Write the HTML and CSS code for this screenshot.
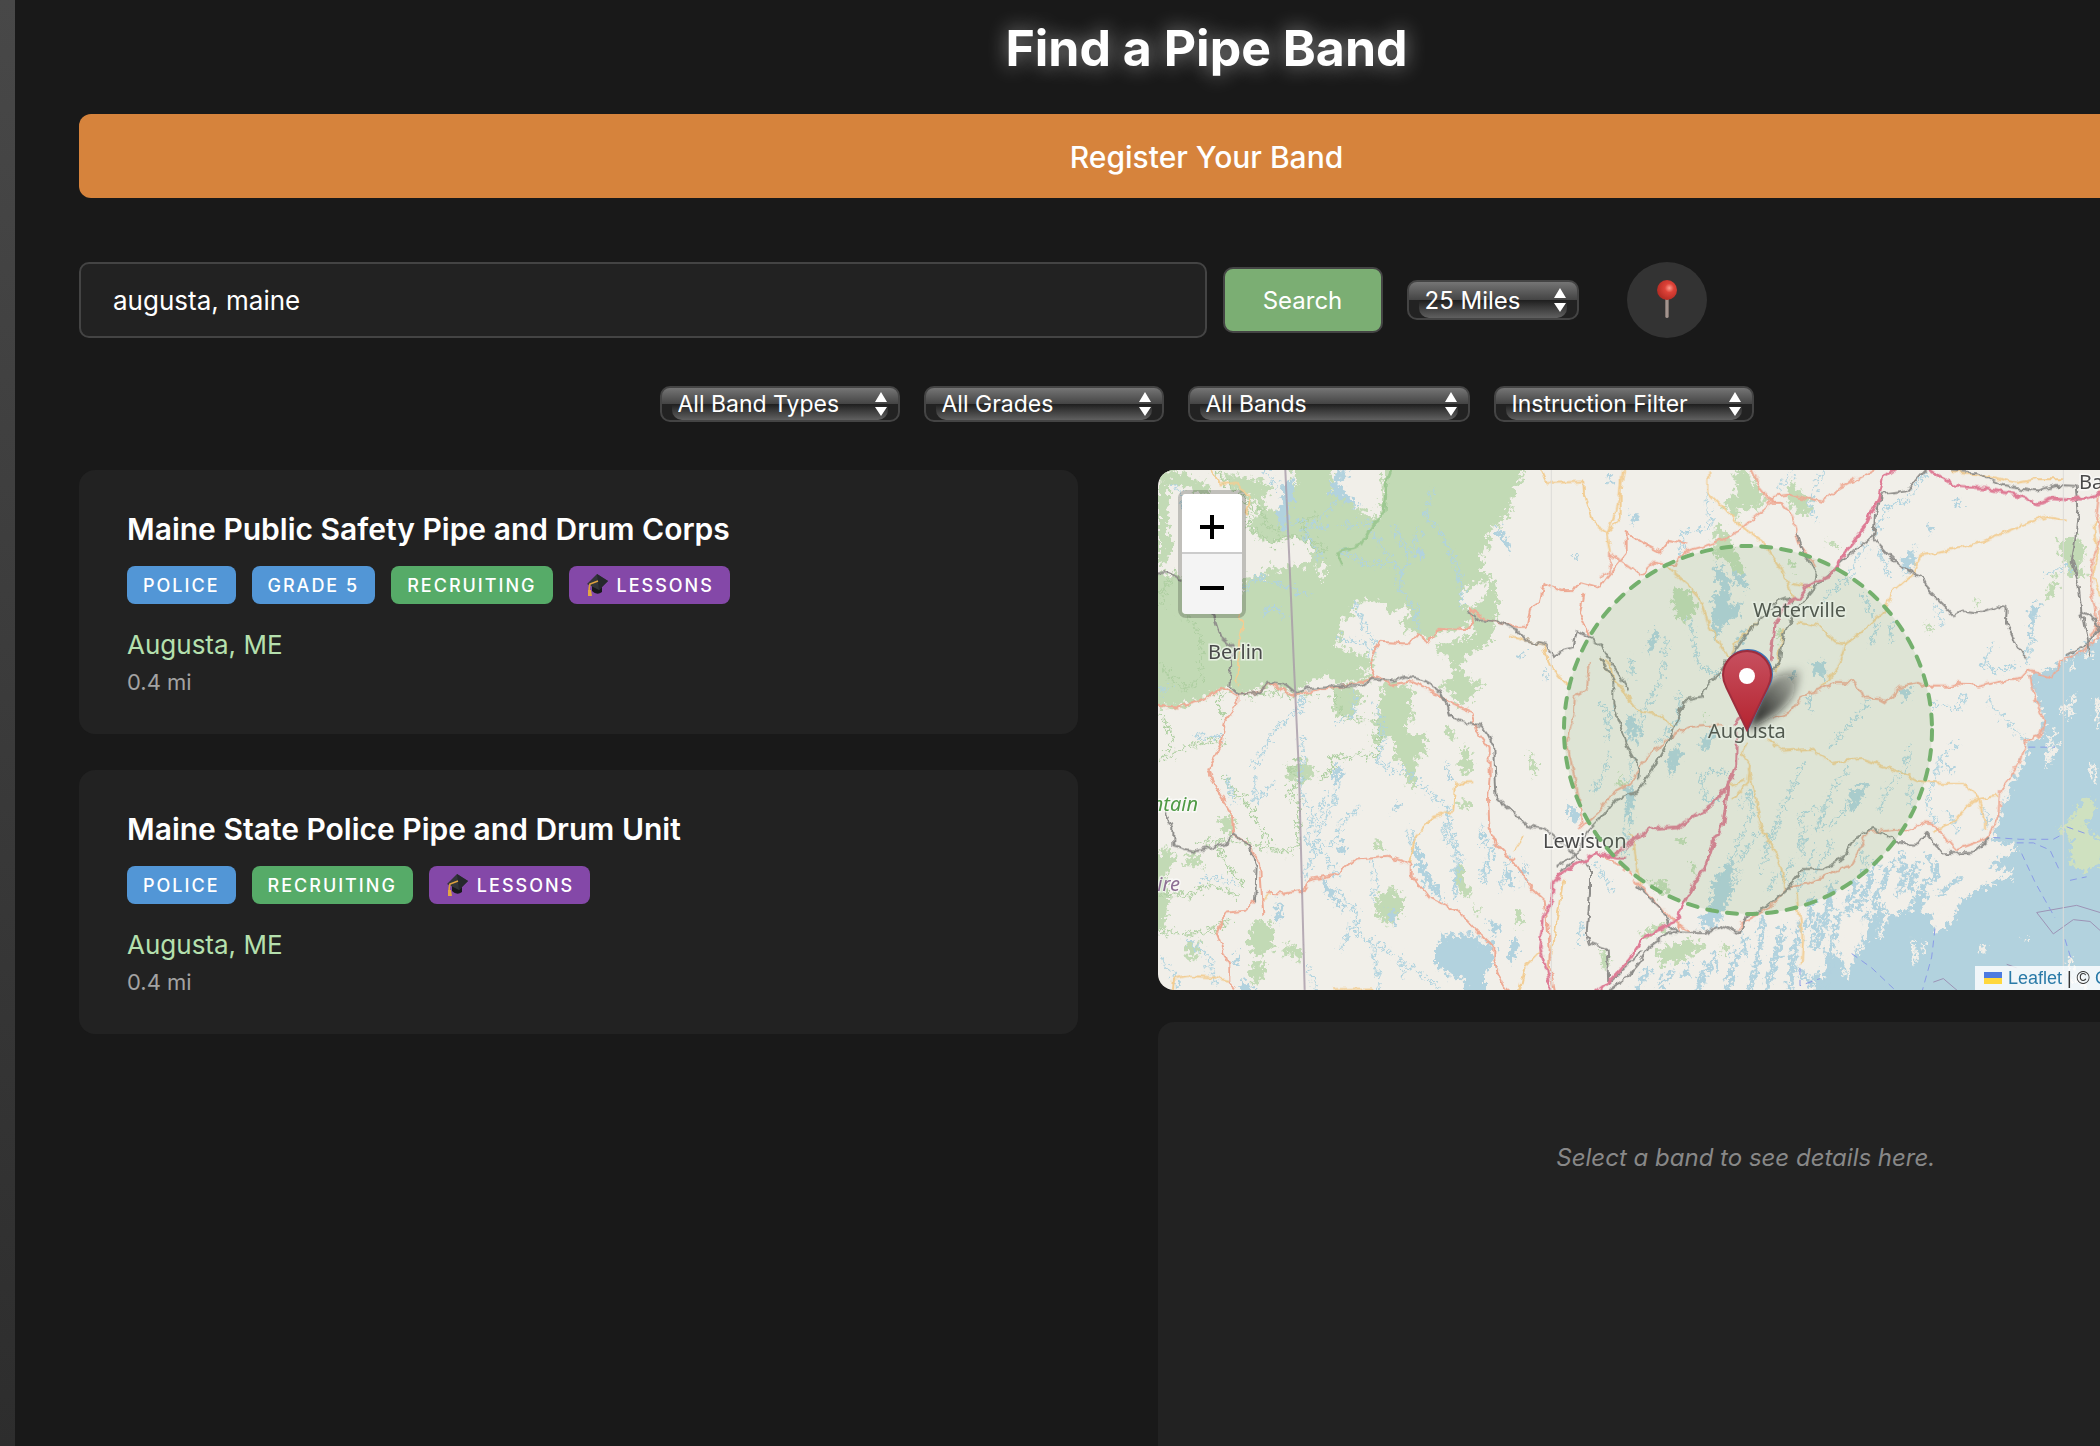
FILE: index.html
```html
<!DOCTYPE html>
<html lang="en">
<head>
<meta charset="utf-8">
<title>Find a Pipe Band</title>
<link rel="stylesheet" href="styles.css">
</head>
<body>
<main class="shell">
  <h1 class="title">Find a Pipe Band</h1>
  <button class="register" type="button">Register Your Band</button>

  <form class="search">
    <input class="search-input" type="text" value="augusta, maine" aria-label="Location">
    <button class="search-button" type="button">Search</button>
    <span class="picker picker-radius">
      <select aria-label="Radius"><option>25 Miles</option></select>
      <svg class="arrows" viewBox="0 0 12 24" aria-hidden="true"><path d="M6 0l6 10H0zM6 24l6-9H0z"/></svg>
    </span>
    <button class="locate" type="button" aria-label="Use my location">
      <svg viewBox="0 0 24 44" aria-hidden="true">
        <defs>
          <radialGradient id="ball" cx=".62" cy=".4" r=".65"><stop offset="0" stop-color="#ff9c8e"/><stop offset=".35" stop-color="#dd4238"/><stop offset="1" stop-color="#b02a22"/></radialGradient>
          <linearGradient id="needle"><stop offset="0" stop-color="#6e625e"/><stop offset=".5" stop-color="#b5a6a0"/><stop offset="1" stop-color="#6a5d58"/></linearGradient>
        </defs>
        <path d="M10 20h4v19q-2 2-4 0z" fill="url(#needle)"/>
        <circle cx="12" cy="12" r="10" fill="url(#ball)"/>
      </svg>
    </button>
  </form>

  <div class="filters">
    <span class="picker picker-types"><select aria-label="Band type"><option>All Band Types</option></select><svg class="arrows" viewBox="0 0 12 24" aria-hidden="true"><path d="M6 0l6 10H0zM6 24l6-9H0z"/></svg></span>
    <span class="picker picker-types"><select aria-label="Grade"><option>All Grades</option></select><svg class="arrows" viewBox="0 0 12 24" aria-hidden="true"><path d="M6 0l6 10H0zM6 24l6-9H0z"/></svg></span>
    <span class="picker picker-bands"><select aria-label="Bands"><option>All Bands</option></select><svg class="arrows" viewBox="0 0 12 24" aria-hidden="true"><path d="M6 0l6 10H0zM6 24l6-9H0z"/></svg></span>
    <span class="picker picker-instruction"><select aria-label="Instruction"><option>Instruction Filter</option></select><svg class="arrows" viewBox="0 0 12 24" aria-hidden="true"><path d="M6 0l6 10H0zM6 24l6-9H0z"/></svg></span>
  </div>

  <div class="columns">
    <section class="results">
      <article class="card">
        <h2>Maine Public Safety Pipe and Drum Corps</h2>
        <div class="tags">
          <span class="tag">Police</span><span class="tag">Grade 5</span><span class="tag tag-green">Recruiting</span>
          <span class="tag tag-purple"><svg class="cap" viewBox="0 0 24 24" aria-hidden="true"><path d="M7 10l10 4v5q-5 4-10-1z" fill="#17181b"/><path d="M12 1l11 7-9 9-12-6z" fill="#33353a"/><path d="M12 1l11 7-9 9z" fill="#26282c"/><path d="M13 8L5 11q-1 4-1 8" fill="none" stroke="#dfa23e" stroke-width="1.6"/><path d="M3 17h3l1 6H3z" fill="#e3a842"/></svg>Lessons</span>
        </div>
        <p class="place">Augusta, ME</p>
        <p class="distance">0.4 mi</p>
      </article>
      <article class="card">
        <h2>Maine State Police Pipe and Drum Unit</h2>
        <div class="tags">
          <span class="tag">Police</span><span class="tag tag-green">Recruiting</span>
          <span class="tag tag-purple"><svg class="cap" viewBox="0 0 24 24" aria-hidden="true"><path d="M7 10l10 4v5q-5 4-10-1z" fill="#17181b"/><path d="M12 1l11 7-9 9-12-6z" fill="#33353a"/><path d="M12 1l11 7-9 9z" fill="#26282c"/><path d="M13 8L5 11q-1 4-1 8" fill="none" stroke="#dfa23e" stroke-width="1.6"/><path d="M3 17h3l1 6H3z" fill="#e3a842"/></svg>Lessons</span>
        </div>
        <p class="place">Augusta, ME</p>
        <p class="distance">0.4 mi</p>
      </article>
    </section>

    <section class="side">
      <div class="map">
        <svg class="map-canvas" viewBox="0 0 1177 520" preserveAspectRatio="xMinYMin slice" role="img" aria-label="Map of Augusta, Maine">
          <defs>
            <linearGradient id="pin" x2="0" y2="1"><stop offset="0" stop-color="#c7505f"/><stop offset="1" stop-color="#b52430"/></linearGradient>
            <linearGradient id="shade" x1="0" y1="1" x2="1" y2="0"><stop offset="0" stop-color="#111" stop-opacity="1"/><stop offset="1" stop-color="#111" stop-opacity=".2"/></linearGradient>
            <filter id="soft" x="-40%" y="-40%" width="180%" height="180%"><feGaussianBlur stdDeviation="4"/></filter>
            <!-- natural wobble for coasts, streams and roads -->
            <filter id="rough" filterUnits="userSpaceOnUse" x="0" y="0" width="3700" height="1600"><feTurbulence type="fractalNoise" baseFrequency=".07" numOctaves="3" seed="4"/><feDisplacementMap in="SourceGraphic" scale="52" xChannelSelector="R" yChannelSelector="G"/></filter>
            <filter id="wavy" filterUnits="userSpaceOnUse" x="0" y="0" width="3700" height="1600"><feTurbulence type="fractalNoise" baseFrequency=".04" numOctaves="2" seed="9"/><feDisplacementMap in="SourceGraphic" scale="22" xChannelSelector="R" yChannelSelector="G"/></filter>
          </defs>
          <g class="geo" transform="translate(-18 -20) scale(.33333 .35714)">
            <g filter="url(#rough)">
            <g class="forest">
              <path d="M54 95L88 90 84 240 100 265 90 300 54 325zM450 40H572L575 85 568 115 600 135 660 165 695 190 710 180 690 165 705 150 725 165 730 40H1160L1130 98 1131 120 1110 135 1113 180 1082 186 1085 212 1060 210 1040 235 1052 260 1020 300 1032 312 1027 340 1058 358 1072 400 1075 460 1058 500 1055 530 1020 560 985 575 960 603 985 640 1040 656 1000 672 998 700 960 716 940 690 900 655 930 640 945 606 905 570 880 545 965 530 1000 480 975 490 940 510 900 505 870 530 830 512 795 505 785 480 815 450 800 440 745 455 730 430 700 418 660 425 635 445 638 462 600 470 596 500 612 530 580 545 620 560 700 580 700 610 650 615 705 640 600 655 560 630 510 650 465 680 400 655 350 665 300 685 250 665 200 690 110 722 30 722V345L120 350 170 375 240 390 300 400 310 360 350 350 400 360 440 320 470 330 510 310 520 285 490 250 440 250 400 265 350 250 330 215 340 190 360 170 335 130 345 105 390 115 410 135 400 160 430 175 440 120 470 100z"/>
              <path d="M40 58L90 56 130 62 165 85 205 95 210 122 170 118 130 100 70 90zM225 62L330 80 400 95 350 135 310 125zM370 340l20-16 20 6 0 40-20 8zM735 650l70 8 20 25-15 30 12 40-25 10 10 30 45 0 12 50-40 20 10 90-30-20-20-60-25-10 12-40-20-20-30 0-12-30-15-8 30-30-5-40zM575 660l60 0 40 30-50 60-40-10zM920 770l30 20-10 18-25-10zM970 830l20 15 10 50-25 15-20-30zM1165 835l20 45 12 10-14 20-15-30zM960 980l35 5-10 20-35-8zM955 1160l20 10 0 40 20 30-20 15-30-50zM720 1240l40-15 30 35-5 40-30 30-40-20-10-40zM330 1330l30-15 45 20-5 60-40 20-35-20zM325 1440l60-5-10 30-30 30-20-20zM40 1150l34-40 30 20-20 60 0 80-10 70-34 10zM155 1120l40 45-65 0zM140 1380l40 0-10 50-35-10zM420 1400l50-20 20 40-30 5zM1000 1270l20 30-20-5zM1130 1280l20 30-15 30-10-30zM700 1100l20-5 14 15-20 15zM230 1040l30-20 30 30-20 30zM440 880l60-10 30 30-40 30-50-10zM690 790l30 0 0 30-25 0z"/>
              <path transform="translate(1380)" d="M370 150l40-30-10-60 40-4 60 90-30 20-60 0 10 40zM575 80l15 30 50 30-20 45-30-5-30-50zM345 210l30 10 60 120-20 10-30-40-40-10zM215 390l60 5 20 50-40 40-30-20zM1370 255l60-10 30 30-20 50 20 30-55 0zM1365 350l10 30-25 40-10-20zM980 485l25 20-25 0zM1130 415l10 20-10 15zM150 1210l50 0 10 30-35 10zM60 905l15 30-20 10zM120 1350l70-25 10 20-70 20zM170 1400l100-30 50 20-70 40-70 10zM370 1380l20 10-10 30-15-10zM570 310l20 10-15 20zM530 500l20 10-15 30zM0 1400l40 30-30 30zM670 255l50 5-10 12-30-6zM310 735l8 10-10 14zM240 1085l18 5-5 14-14-2zM270 1155l20 5-4 20-18 2z"/>
            </g>
            <g class="land"><path d="M1000 375l50-8-10 40-50 40-25-10 0-40zM530 320l30 8-15 40-15-20zM695 155l30 0-10 40-20-15zM370 130l30-20 35 15-10 50-40-10zM980 490l30 10-30 40z"/></g>
            <g class="green-line">
              <path d="M225 62l60 50 50 40-10 60 70 50 40-20 50 5 60 15 10 30-50-30-20-60 50-20M360 150l20 60 40 20M54 400l20 5 0-40 20 0 0-30M60 430l20 0M60 590l30 50 50 30 40-30 5-100-25-60-40-20M60 740l40 70-40 60 80-40 80-15 40 5M250 680l-20 30 20 40M310 690l100-10 60 10 60-5M580 680l30 75 110-5M720 750l-10 110-60-10-30 15-40-10-5 40-40 30M490 870l-45 20 40 30-40 40 30 30 0 110-50 30-60-20-100-20-100 15M245 910l30 40 50 40 30 60 40 60 60 20M60 1240l90 5 60-30 90 35M54 1350l100 5 60-10 60-35M230 1100l30 60 50 60"/>
            </g>
            <g class="lake">
              <path d="M570 95l30-40 30 5-30 40 60 60-40-10-50-30zM420 100l40-25 5 60-20 20 0 80-25-10-10-50 20-30zM1060 210l35 15 15 60-20-20zM820 290l20-20 12 25-15 20zM1296 295l20 0-8 14zM585 880l20 10-10 50-15-10zM820 1085l20 40 30 70 45 60-10 15-50-60-30-70zM885 1395l30-40 90 0 15 30 40-10 5 60-30 30 0 65H985l-15-50-50-10-35-30zM1045 1315l35 15-10 30-25-20zM1025 1040l15 60-20 10zM1100 1160l25 60-5 15-25-50zM1280 985l40 40-15 25-20-20zM1150 1150l10 20-12 60zM1120 1360l20 20-25 60-12-10zM545 1200l20 20 50 60-5 10-60-60zM595 1100l30 10-10 20-25-5zM410 1265l20 10-10 50-10-10zM1215 610l12 30-10 5zM1140 560l12 10-18 25zM290 1400l10 20-5 30-10-10zM740 1290l30 0 0 40-20-10zM770 980l10 10-20 30zM910 870l25 40-5 20zM300 1480l40 25v27h-30z"/>
              <path transform="translate(1380)" d="M345 310l50 60-20 20-30-30zM400 330l50 50-15 10-30-20zM340 410l50-40 0 70 40-20-20 50-30 10-30 50-15-70zM160 500l20 15-30 60-10-20zM630 595l45 0 0 50-30-20zM905 310l40-40-5 50-30 30zM75 760l30-20 20 60-30 20zM200 870l25-40 20 20-35 70zM300 820l40-50 10 20-40 60zM755 950l50-10-20 40-30 40-10-30zM620 690l20 0-10 50zM900 670l30 0-10 40zM400 540l40-40-5 40zM380 1160l20 0-5 60 30-50-50 120-40 50-40-10 40-60 0-60zM230 740l20-40-20 80zM80 940l20 10-5 90-20-10zM1290 440l30-10-25 70 10 40-20-10zM1035 890l30-10-10 30zM90 180l30 0-15 30zM1060 140l30 10-20 10zM20 70l20 0-15 25zM985 210l15 10-15 20zM1150 1000l20 40-10 20zM560 640l30-20-10 30z"/>
            </g>
            <path class="sea" transform="translate(1380)" d="M1560 500L1500 535 1480 530 1450 555 1400 580 1360 610 1290 625 1310 690 1335 760 1325 800 1280 820 1283 850 1255 900 1225 945 1225 985 1205 985 1200 1040 1175 1085 1215 1105 1255 1110 1225 1135 1180 1150 1175 1165 1240 1180 1235 1200 1190 1205 1130 1235 1080 1260 1060 1320 1020 1345 1000 1340 995 1300 965 1290 985 1235 945 1240 930 1285 890 1305 860 1290 845 1265 820 1310 795 1290 790 1360 765 1400 755 1460 735 1470 725 1420 700 1400 690 1450 670 1480 640 1460 640 1560H2300V500z"/>
            <g class="sea-streak">
              <path transform="translate(1380)" d="M640 1250l-20 90M700 1210l-20 90-30 100M720 1290l-40 150M770 1200l-30 100M830 1150l-30 80-30 60M880 1150l-60 120 20 60M900 1130l20 60-30 60M950 1150l-20 90M980 1130l30 60-50 40M600 1320l-20 100-10 100M550 1330l-20 90M530 1400l-30 120M490 1310l-10 80-30 130M440 1360l-10 60M410 1400l-30 120M345 1410l-10 50M320 1440l-30 80M270 1440l-20 40M220 1460l-40 40M150 1450l-40 60M590 1450l60 60M700 1400l-30 110M890 1170l50 30M1080 1200l-60 40M660 1300l-30 90"/>
            </g>
            <g class="land-streak">
              <path transform="translate(1380)" d="M1420 690l-15 60M1405 710l-20 20M1490 700l10 80M1360 790l-20 90M1370 830l-25 40M1480 880l4 40M1420 590l0 20M1460 570l15 10M940 1380l5 50M970 1385l4 20M1020 1280l-10 60M1150 1385l-3 20M1410 1420l0 60M1430 1480l20 20M860 1300l-20 60M800 1320l-20 90M760 1400l-20 70M720 1350l-15 60M1275 1368l5 3"/>
            </g>
            <path class="isle" transform="translate(1380)" d="M1375 1060l35-20 20-40 35-25 20 5 0 40-30 30 15 30 40 0 0 90-30-5-30 20-40-30 10-50-20-20z"/>
            <g class="stream">
              <path d="M880 110l-25 75 50 50 40 80 20 60 0 60M690 220l40 60 50 60 0 50 50 60 5 50M760 210l30 60 20 30-30 60M840 220l-30 70M600 130l-80 80-30 20 40 50 5 30M600 210l100-5M640 430l50 90 20 40M560 220l-80-20-60 20M600 280l80 40 90 0M310 390l40-35 70 20 90 35M370 470l10-25 40 0 10 30M590 525l90 20 15 30M490 690l-5 30-80 60-40 70-35 40M400 930l-50 60-10-80M640 670l5 60-60 40M710 710l20 100-20 60 50 30 30-10 80 70 50 40 10 70 20 40-10 150M480 800l10 20-10 140 40 60-20 80 60 40 40 60M560 960l-20 60-20 120-30 60M600 930l-30 80-50 100M660 1000l-50 40-30 60-40 10M800 1060l30 70 30 90M930 1000l-20 80 60 60M1020 1060l30 60-20 100M1060 1110l-40 90M700 1150l10 60-10 50M1110 1140l-30 100M960 1140l-20 120M590 1230l60 60 0 60 60 40 70 30 10 60M640 1320l-40 80M500 1440l30 70M260 920l30 80M1330 1330l-20 60M1360 1150l60 90M100 90l30 40 0 50M380 60l30 40M60 1420l50 60 0 30M160 800l40 5 50-5M180 1200l60 0 50 20M140 1370l60 40 30 90M700 1390l20 120M800 1440l90 60M60 680l30-20"/>
              <path transform="translate(1380)" d="M320 130l10 90-80 10-10 70M580 56l-45 50M660 70l-30 80 20 60M980 60l-60 80-60 20-40 80M800 260l-60 100-70 60M880 480l-10 60M790 400l40 90-20 60M830 270l40 80M270 470l30 140 60 20M200 530l-20 120-50 80-10 60M240 680l-10 80-60 60M610 880l-60 120-60 120M740 890l-60 90-30 80M660 1000l-60 20 10 80 0 40M810 700l-60 70-60 60M930 830l-10 60-60 60-20 60M420 1000l30-40 10 50-30 60-40 80-30 60M480 1060l-60 90M540 1040l-60 140M530 1180l-30 60M690 980l-40 90M740 1000l-60 60M380 900l-80 10 20 70 40 0M100 860l-20 90 10 80-20 120M0 710l30 20-10 80M30 850l-20 60-30 50M930 940l0 60M1090 680l-10 50-80-20M1160 700l60 60 60 60M1180 540l-30 60 40 20 60-20M1290 540l-10 60M1080 820l-60 40-20 80M1000 930l-20 60 30 60M1040 1010l40 60M1010 440l20 50M1330 350l60-20 40 0M620 1060l-30 60M650 1110l-60 120M580 1140l-40 80M780 1100l20 90M700 1100l-60 90M100 640l-10-60"/>
            </g>
            </g>
            <g filter="url(#wavy)">
            <path class="trail" d="M760 40L740 90 732 175 700 205 665 265 590 290 605 320"/>
            <g class="minor">
              <path d="M208 40l30 56 50-4 45 43-15 45M295 460l12 40-10 40-5 115M1195 40l25 53 110-5 2 40 30 80 40 25 40-40 0-120M1000 930l-55 2-5 80-60 15-55 55-15 80M1110 520l100 25 20 60 60 60M1395 590l20 15 5 40 30 20M97 1530l5-50 40-8 80 5 40 10M1135 1532l20-80 50-50M1270 1200l-20 120-30 150M1120 1120l30-40M365 1260l30-15M580 1510l120-2"/>
              <path transform="translate(1380)" d="M75 40l-25 128-30 70 10 50M325 60l0 60 100 95 60 40 50 60 30 60 20 50M205 330l60 50 40 40 20 70 60 90M0 580l40 60 80 95 60 10 40 30M470 480l-60 60-20 40M590 480l60 10 60 50 25 5-20 60-50 60M730 545l50-30 70-60 30-60 60-50 20-50 60-10 130-30 130-50 60-20 60 10M550 500l-20 120M575 375l60 10M500 810l50 32 80-5 70 40 80-15 120 40 50 25 80 5 60 0 45 40 20 60 0 30M1000 1070l60-30 60-60 75-12M440 820l-15 30 25 30-5 50-50 50M445 890l20 80 20 90 50 80 25 90M590 1240l5 60 15 60-5 80M80 1075l20 10 10 80 10 50M385 940l50-15M1050 62l110 10 90 20 60-10 80 0M1500 190l-20 20 15 70-15 60 20 70"/>
            </g>
            <g class="trunk">
              <path d="M40 715l69 6 80-20 60-38 40 22 55-3 45-28 50 22 25 13 50-15 100-15 40-5 60-20 40 22 60-8 50 22 30 10 20 20 80 35 15 50 40 50 0 80-5 60 5 90 20 35 60 60 50 70 35 30 15 130 0 50 15 70-5 60M705 640l-15-40 10-35 20-28 90 5 25-28 30 22 30-35 80 3 25-20-10-42 40 33 100 20 30 0 10-50 30-20 10-50 60 20 30 0 20-25 60 15 20-25 60-70 0-60 50 30 50 25 25-30 60 10M1330 400l-10 60 30 60M295 690l0 20-40 50-10 60-40 75 30 60 40 60 5 65 40 20 40 60 10 140M345 1265l-30 25-55 5-30 60 35 85 0 50 20 20M385 1240l45 2 60-8 20-30 80-15 60-45 90-8 75 25 0 30 50 60 60 28 30 10 60 60 45 40 0 40 35 80 30 25"/>
              <path transform="translate(1380)" d="M0 355l30-15 0-50 90 60 40-35 60 10 30-40 60-15 60-20 60-35 85-68-30-35-30-60M500 150l20-20 50-5 100 20 50-40 110-55M510 148l35 0 30 30 20 80 55 75M220 800l50-25 100-5M520 750l50-15 35-45 60-20 40-20 60 0 30 45 40 2 20 10 50-45 50-10 30 10 60 0 30-10 60 10 70-15 60-10 20-20 70 20 30-45 60-25 20-20 30-15-10-90-10-40 0-90 30-70-15-60 10-80 30-20M1290 630l15 70 30 60-15 40-40 15-20 60-60 80-5 70-30 60-100 35-60-70-30-5-60 20-30-5-80 10-50 90-80 35-60 20-50 10-60 60-80 40-10 20M220 800l-70 50-30 30-20 50-60 30-40 50-60 50M-30 590l-10 80-35 20-5 50-20 80 20 80 20 90 5 60M100 1200l60 60 50 50 60 40M235 1350l0-30M0 1130l100 60M1500 430l0 60-30 30"/>
            </g>
            <g class="rail">
              <path d="M40 345l44-5 40 25M215 450l25 70 38 30-10 110 30 25 50-3 40-30 50 8 30 23 30-14 90-10 80 2 30-20 60 5 40-12 50 10 35 18 20 15 20 40 10 30 30 15 60 8 20 25 20 40 2 60 5 80 90 75 60 15 90 70 40 35 0 70-10 110 10 30 50 15 5 100 100-90M985 450l35 28 60 5 50 20 30 30 55 12 30 35 15-15 40-10 10-50 35 15 40 30 40 60 40 60M75 1010l25 50 0 50 60 15 95-20 25-28 45 30 25 60-5 100M1250 1165l65-40 20-50 50-50M1260 1180l50-30"/>
              <path transform="translate(1380)" d="M990 40l-70 73-75 10-20 60-5 65 40 40 60 50 50 20 20 40 70 65 30-10 40 5 60-20 30 5-2 40 30 60 30 40M820 240l-80 60-100 90-60 70-30 60-10 70-20 30M590 230l20 60 40 55-10 45M400 570l60-80 50-40 20-30 30-10 20 20M380 590l-30 40-30 30-15 30-50 10-30 70-10 30-60 100-50 60-60 20-50 60M0 580l40 60 0 70 40 120 38 60-3 30M1050 58l80 5 80 35 100 15 60-15 60 3 5 60-10 100-10 50 20 60 10 90 5 20 20 100M1400 575l60-30 40-50-20-25-40-15M1170 1085l-50 40-90 5-50-60-30 35-50-2-80-45-60 35-30 50-60 30-60 0-50 60-80 60-40 10-20 50-50-20-60 20-100-3-60 40-60 80-60 40M110 1220l70 60 30 50 20 20"/>
            </g>
            <g class="motorway">
              <path d="M1230 1532l-5-60-25-80 10-80 25-50 5-50 30-30 60-30 40-22 60 10 25 0"/>
              <path transform="translate(1380)" d="M0 1130l40 5 110-75 85-5 100-60 50-60 22-50 2-90M400 770l30-30M385 930l-10 80-10 50-30 50-20 60-30 40-60 110-100 50-40 60-60 60-80 60M510 590l15-100 30-60 40-15 30-40 60-20 60-80 50-60 40-80 15-60 90-60M965 40l100 61 80 5 110 20 60 25 40-15 60 5 60-10 60-20"/>
            </g>
            </g>
            <path class="border" d="M436 56l12 250 14 300 15 300 17 606"/>
            <g class="ferry"><path transform="translate(1380)" d="M1285 832h80M1180 1085l80 5 100 0 20-10M1250 1100l50 0 50 20 30 60M1265 1130l40 80 60 100M1400 1055l60 20M1005 1340l-10 80-30 100M755 1410l60 40 70 62M600 1450l0 50 60-20M1395 1370l20 60M1410 1205l50-10"/></g>
            <path class="boundary" transform="translate(1380)" d="M1360 1355l-50-60 120-20 70 20M1360 1355l60-40 50 5 60 50M1000 1490l30-10 50 40M1220 1440l30 10"/>
            <path class="seam" d="M1234 56V1512M2770 56V1512"/>
          </g>

          <g class="labels">
            <text x="50" y="189">Berlin</text>
            <text x="595" y="147">Waterville</text>
            <text x="550" y="268">Augusta</text>
            <text x="385" y="378">Lewiston</text>
            <text x="921" y="19">Bangor</text>
            <text class="peak" x="40" y="341" text-anchor="end">Mountain</text>
            <text class="state" x="22" y="421" text-anchor="end">Hampshire</text>
          </g>
          <circle class="range" cx="590" cy="260" r="184"/>
          <path d="M590 260l10-34q14-26 42-26 0 26-24 44z" fill="url(#shade)" filter="url(#soft)"/>
          <path transform="translate(565 179) scale(2)" fill="#3d76b5" d="M12.5 0C5.6 0 0 5.6 0 12.5c0 2.400.7 4.600 1.800 6.600L12.500 41l10.700-21.900c1.100-2 1.800-4.200 1.800-6.600C25 5.600 19.400 0 12.500 0z"/>
          <path transform="translate(564 180) scale(2)" fill="url(#pin)" stroke="#9e2d3c" d="M12.500 .5C5.900 .5 .5 5.900 .5 12.500c0 2.300.7 4.400 1.700 6.300L12.500 40l10.300-21.200c1-1.900 1.700-4 1.700-6.300C24.500 5.900 19.100 .5 12.500 .5z"/>
          <circle cx="589" cy="206" r="8" fill="#fff"/>
        </svg>
        <div class="zoom">
          <button type="button" aria-label="Zoom in"><svg viewBox="0 0 26 26" aria-hidden="true"><path d="M1 13h24M13 1v24"/></svg></button>
          <button type="button" aria-label="Zoom out"><svg viewBox="0 0 26 26" aria-hidden="true"><path d="M1 13h24"/></svg></button>
        </div>
        <div class="credit"><svg viewBox="0 0 18 12" aria-hidden="true"><path fill="#4c7be1" d="M0 0h18v6H0z"/><path fill="#ffd83d" d="M0 6h18v6H0z"/></svg><a href="#">Leaflet</a> | © <a href="#">OpenStreetMap</a> contributors</div>
      </div>
      <div class="details"><p>Select a band to see details here.</p></div>
    </section>
  </div>
</main>
</body>
</html>
```
FILE: styles.css
```css
* { box-sizing: border-box; }

html { background: #191919; }

body {
  margin: 0;
  min-height: 100vh;
  overflow-x: hidden;
  background: linear-gradient(#484848, #2c2c2c);
  color: #fff;
  font-family: Inter, "Liberation Sans", sans-serif;
}

h1, h2, p { margin: 0; }

button, input, select {
  font-family: inherit;
  color: inherit;
}

/* The shell runs past the right edge of the window. */
.shell {
  display: flex;
  flex-direction: column;
  min-height: 100vh;
  margin: 0 -298px 0 15px;
  padding: 16px 64px 0;
  background: #191919;
}

.title {
  font-size: 50px;
  line-height: 64px;
  font-weight: 700;
  text-align: center;
  text-shadow: 0 0 20px rgba(255, 255, 255, .5);
}

.register {
  height: 84px;
  margin-top: 34px;
  padding-top: 3px;
  border: 0;
  border-radius: 12px;
  background: #d6833c;
  font-size: 30px;
  font-weight: 500;
}

.search {
  display: flex;
  align-items: center;
  margin-top: 64px;
}

.search-input {
  width: 50%;
  height: 76px;
  padding: 0 32px;
  border: 2px solid #444;
  border-radius: 10px;
  background: #222;
  font-size: 26px;
}

.search-button {
  width: 160px;
  height: 66px;
  margin-left: 16px;
  border: 2px solid #444;
  border-radius: 10px;
  background: #7bae73;
  font-size: 24px;
}

.picker {
  position: relative;
  height: 36px;
  border: 2px solid #444;
  border-radius: 10px;
  background: linear-gradient(#757575, #444) top / 100% 50% no-repeat #222;
}

.picker::before {
  content: "";
  position: absolute;
  inset: 50% 10px 0;
  border-radius: 0 0 10px 10px;
  background: linear-gradient(#1e1e1e, #3a3a3a 40%, #606060);
}

.picker select {
  position: relative;
  display: block;
  width: 100%;
  height: 100%;
  padding: 0 16px;
  border: 0;
  appearance: none;
  background: none;
  font-size: 23px;
}

.arrows {
  position: absolute;
  top: 4px;
  right: 11px;
  width: 12px;
  height: 24px;
  fill: #fff;
  pointer-events: none;
}

.picker-radius { width: 172px; height: 40px; margin-left: 24px; }
.picker-radius select { font-size: 24px; }
.picker-radius .arrows { top: 6px; }
.picker-types { width: 240px; }
.picker-bands { width: 282px; }
.picker-instruction { width: 260px; }

.locate {
  display: grid;
  place-items: center;
  width: 80px;
  height: 76px;
  margin-left: 48px;
  padding: 0;
  border: 0;
  border-radius: 50%;
  background: #333;
}

.locate svg { width: 24px; height: 44px; }

.filters {
  display: flex;
  justify-content: center;
  gap: 24px;
  margin-top: 48px;
}

.columns {
  flex: 1;
  display: grid;
  grid-template-columns: 1fr 1.178fr;
  gap: 80px;
  margin-top: 48px;
}

.results {
  display: flex;
  flex-direction: column;
  gap: 36px;
}

.card {
  height: 264px;
  padding: 39px 48px;
  border-radius: 16px;
  background: #222;
}

.card h2 {
  font-size: 30px;
  line-height: 40px;
  font-weight: 600;
}

.tags {
  display: flex;
  gap: 16px;
  margin-top: 17px;
}

.tag {
  display: flex;
  align-items: center;
  gap: 8px;
  height: 38px;
  padding: 0 16px;
  border-radius: 8px;
  background: #5296d6;
  font-size: 18px;
  font-weight: 500;
  letter-spacing: 2px;
  text-transform: uppercase;
}

.tag-green { background: #56ab68; }
.tag-purple { background: #8448a8; }
.cap { width: 24px; height: 24px; }

.place {
  margin-top: 23px;
  color: #b5e0ae;
  font-size: 26px;
  line-height: 36px;
}

.distance {
  color: #a3a3a3;
  font-size: 22px;
  line-height: 38px;
}

.side {
  display: flex;
  flex-direction: column;
  gap: 32px;
}

.map {
  position: relative;
  height: 520px;
  overflow: hidden;
  border-radius: 16px;
  background: #f1efe9;
}

.map-canvas { display: block; width: 100%; height: 100%; }

.geo path { fill: none; stroke-linejoin: round; vector-effect: non-scaling-stroke; }
.geo .forest path { fill: #c2dab5; }
.geo .land path { fill: #f1efe9; }
.geo .lake path, .geo .sea { fill: #b2d2de; }
.geo .isle { fill: #cfe1c0; }
.green-line path { stroke: #b0d0a3; stroke-width: 2; }
.geo .trail { stroke: #9dc892; stroke-width: 3; }
.stream path { stroke: #b0d3df; stroke-width: 2; }
.sea-streak path { stroke: #b2d2de; stroke-width: 5; }
.land-streak path { stroke: #f1efe9; stroke-width: 4; stroke-linecap: round; }
.minor path { stroke: #f2cd93; stroke-width: 2; }
.trunk path { stroke: #eeaa94; stroke-width: 2; }
.rail path { stroke: #8f8e8b; stroke-width: 2; }
.motorway path { stroke: #de7b95; stroke-width: 3; }
.geo .border { stroke: #a89aa8; stroke-width: 2; opacity: .8; }
.ferry path { stroke: #8a9be6; stroke-width: 1; stroke-dasharray: 7 5; }
.geo .boundary { stroke: #9c93b5; stroke-width: 1; }
.geo .seam { stroke: #dcdbd8; stroke-width: 1; }

.labels text {
  fill: #4a4a4a;
  stroke: rgba(255, 255, 255, .6);
  stroke-width: 3px;
  paint-order: stroke;
  font-family: "Noto Sans", sans-serif;
  font-size: 20px;
}

.labels .peak { fill: #4f9a45; font-style: italic; }
.labels .state { fill: #8d6f94; font-style: italic; }

.range {
  fill: rgba(123, 174, 115, .16);
  stroke: #74b06d;
  stroke-width: 4;
  stroke-linecap: round;
  stroke-dasharray: 10 10;
}

.zoom {
  position: absolute;
  top: 20px;
  left: 20px;
  overflow: hidden;
  border: 4px solid rgba(0, 0, 0, .2);
  border-radius: 8px;
  background-clip: padding-box;
}

.zoom button {
  display: grid;
  place-items: center;
  width: 60px;
  height: 60px;
  padding: 8px 0 0;
  border: 0;
  background: #f4f4f4;
}

.zoom button:first-child { border-bottom: 2px solid #ccc; background: #fff; }
.zoom svg { width: 26px; height: 26px; fill: none; stroke: #000; stroke-width: 4; }

.credit {
  position: absolute;
  right: 0;
  bottom: 0;
  padding: 0 13px 0 9px;
  background: rgba(255, 255, 255, .8);
  color: #333;
  font: 18px/24px "Liberation Sans", sans-serif;
  white-space: nowrap;
}

.credit svg { width: 18px; height: 12px; margin-right: 6px; }
.credit a { color: #2a7aa8; text-decoration: none; }

.details {
  flex: 1;
  min-height: 480px;
  padding: 116px 48px;
  border-radius: 16px;
  background: #222;
}

.details p {
  color: #888;
  font-size: 24px;
  line-height: 40px;
  font-style: italic;
  text-align: center;
}
```
